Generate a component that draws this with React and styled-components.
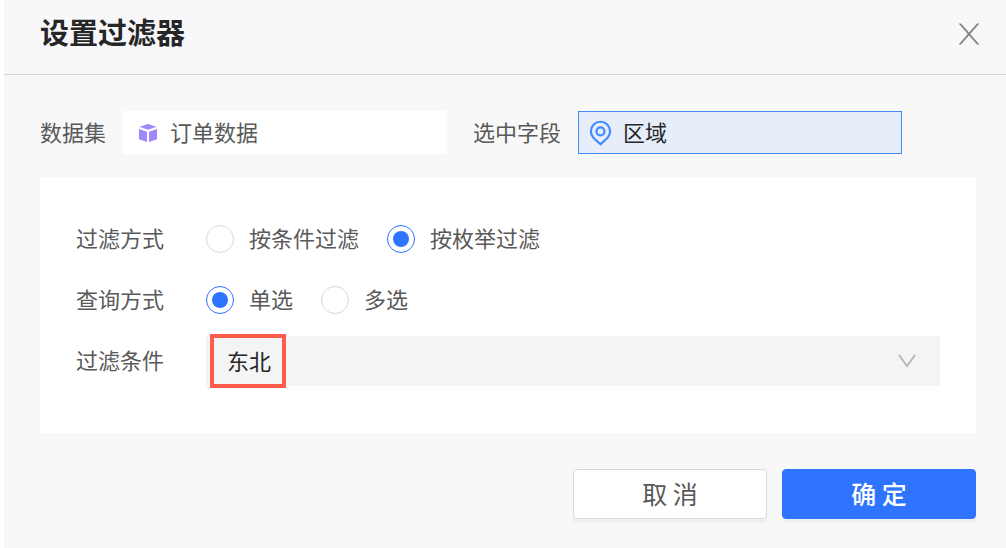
import React, { useState } from 'react'
import styled, { createGlobalStyle } from 'styled-components';

function App() {
  const [mode, setMode] = useState('enum');
  const [query, setQuery] = useState('single');
  const [region, setRegion] = useState('东北');

  return (
    <>
      <GlobalStyle />
      <Dialog role='dialog' aria-labelledby='title'>
        <Header>
          <h1 id='title'>设置过滤器</h1>
          <Close type='button' aria-label='关闭'>
            <svg width='22' height='22' viewBox='0 0 22 22' fill='#858585'>
              <path d='M0.6 0.5 H3 L11 9.4 L19 0.5 H21.4 L12.2 11 L21.4 21.5 H19 L11 12.6 L3 21.5 H0.6 L9.8 11 Z' />
            </svg>
          </Close>
        </Header>

        <Body>
          <Fields>
            <Text>数据集</Text>
            <Field>
              <svg width='26' height='20' viewBox='-4 0 26 20' fill='#a188fc'>
                <path d='M10 1 L18.6 3.8 L10 6.8 L1.4 3.8 Z' />
                <path d='M1 6 L9 8.8 V19 L1 16.2 Z' />
                <path d='M19 6 L11 8.8 V19 L19 16.2 Z' />
              </svg>
              <Text>订单数据</Text>
            </Field>
            <FieldLabel>选中字段</FieldLabel>
            <Field $active>
              <svg width='24' height='26' viewBox='0 0 24 26' fill='none' stroke='#408cff' strokeWidth='2.2'>
                <path d='M11.5 24.2 L4.6 18 A9.6 9.6 0 1 1 18.4 18 Z' />
                <circle cx='11.5' cy='11.3' r='4' />
              </svg>
              <Text>区域</Text>
            </Field>
          </Fields>

          <Card>
            <Row role='radiogroup' aria-labelledby='mode'>
              <RowLabel id='mode'>过滤方式</RowLabel>
              <Option>
                <Radio name='mode' checked={mode === 'condition'} onChange={() => setMode('condition')} />
                <Text>按条件过滤</Text>
              </Option>
              <Option>
                <Radio name='mode' checked={mode === 'enum'} onChange={() => setMode('enum')} />
                <Text>按枚举过滤</Text>
              </Option>
            </Row>
            <Row role='radiogroup' aria-labelledby='query'>
              <RowLabel id='query'>查询方式</RowLabel>
              <Option>
                <Radio name='query' checked={query === 'single'} onChange={() => setQuery('single')} />
                <Text>单选</Text>
              </Option>
              <Option>
                <Radio name='query' checked={query === 'multiple'} onChange={() => setQuery('multiple')} />
                <Text>多选</Text>
              </Option>
            </Row>
            <Row>
              <RowLabel as='label' htmlFor='region'>过滤条件</RowLabel>
              <SelectWrapper>
                <Select id='region' value={region} onChange={(e) => setRegion(e.target.value)}>
                  <option value='东北'>东北</option>
                </Select>
                <Highlight />
                <svg width='18' height='14' viewBox='0 0 18 14' fill='none' stroke='#b8b8b8' strokeWidth='2'>
                  <path d='M1 1 L9 12 L17 1' />
                </svg>
              </SelectWrapper>
            </Row>
          </Card>
        </Body>

        <Footer>
          <Button type='button'>取 消</Button>
          <Button type='button' $primary>确 定</Button>
        </Footer>
      </Dialog>
    </>
  )
}

const GlobalStyle = createGlobalStyle`
  * {
    box-sizing: border-box;
  }
  body {
    margin: 0;
    background: white;
  }
  body, button, select {
    font-family: 'Noto Sans CJK SC', sans-serif;
  }
`

const Dialog = styled.div`
  display: flex;
  flex-direction: column;
  min-height: 100vh;
  margin-left: 4px;
  background: #f8f8fb;
  color: #595959;
  font-size: 22px;
  line-height: 32px;
`

const Header = styled.header`
  display: flex;
  align-items: center;
  justify-content: space-between;
  padding: 13px 26px 19px 36px;
  border-bottom: 1px solid #d3d4d6;
  h1 {
    margin: 0;
    padding-bottom: 6px;
    color: #262626;
    font-size: 29px;
    font-weight: 700;
    line-height: 36px;
  }
`

const Close = styled.button`
  display: flex;
  padding: 0;
  border: 0;
  background: none;
  cursor: pointer;
`

const Body = styled.main`
  padding: 36px 30px 35px 36px;
  background: #f8f8f8;
`

const Fields = styled.div`
  display: flex;
  align-items: center;
  gap: 17px;
  padding-right: 74px;
`

const Text = styled.span`
  padding-bottom: 4px;
`

const FieldLabel = styled(Text)`
  margin-left: 9px;
`

const Field = styled.div`
  display: flex;
  flex: 1;
  align-items: center;
  gap: 10px;
  height: 43px;
  padding: 0 10px;
  border: 1px solid ${(props) => (props.$active ? '#408cff' : 'white')};
  background: ${(props) => (props.$active ? '#e7edf9' : 'white')};
  color: ${(props) => (props.$active ? '#262626' : '#595959')};
`

const Card = styled.section`
  display: flex;
  flex-direction: column;
  gap: 11px;
  margin-top: 23px;
  padding: 37px 36px 47px;
  background: white;
`

const Row = styled.div`
  display: flex;
  align-items: center;
  height: 50px;
`

const RowLabel = styled(Text)`
  flex: none;
  width: 130px;
`

const Option = styled.label`
  display: flex;
  align-items: center;
  gap: 15px;
  margin-right: 28px;
  cursor: pointer;
`

const Radio = styled.input.attrs({ type: 'radio' })`
  display: grid;
  place-items: center;
  width: 28px;
  height: 28px;
  margin: 0;
  border: 1px solid #d9d9d9;
  border-radius: 50%;
  background: white;
  appearance: none;
  &:checked {
    border-color: #2e74ff;
  }
  &:checked::before {
    width: 16px;
    height: 16px;
    border-radius: 50%;
    background: #2e74ff;
    content: '';
  }
`

const SelectWrapper = styled.div`
  position: relative;
  flex: 1;
  svg {
    position: absolute;
    top: 18px;
    right: 24px;
    pointer-events: none;
  }
`

const Select = styled.select`
  display: block;
  width: 100%;
  height: 50px;
  padding: 0 48px 2px 21px;
  border: 0;
  border-radius: 0;
  background: #f4f4f4;
  color: #262626;
  font-size: 22px;
  appearance: none;
`

// red frame around the chosen value
const Highlight = styled.div`
  position: absolute;
  top: -2px;
  left: 4px;
  width: 76px;
  height: 54px;
  border: 4px solid #ff5a4d;
  pointer-events: none;
`

const Footer = styled.footer`
  display: flex;
  justify-content: flex-end;
  gap: 15px;
  padding: 1px 30px 29px;
`

const Button = styled.button`
  width: 194px;
  height: 50px;
  padding: 0 0 2px;
  border: 1px solid ${(props) => (props.$primary ? '#2e74ff' : '#d9d9d9')};
  border-radius: 4px;
  background: ${(props) => (props.$primary ? '#2e74ff' : 'white')};
  box-shadow: 0 4px 0 rgba(0, 0, 0, 0.03);
  color: ${(props) => (props.$primary ? 'white' : '#595959')};
  font-size: 25px;
  font-weight: ${(props) => (props.$primary ? 500 : 400)};
  cursor: pointer;
`

export default App;
